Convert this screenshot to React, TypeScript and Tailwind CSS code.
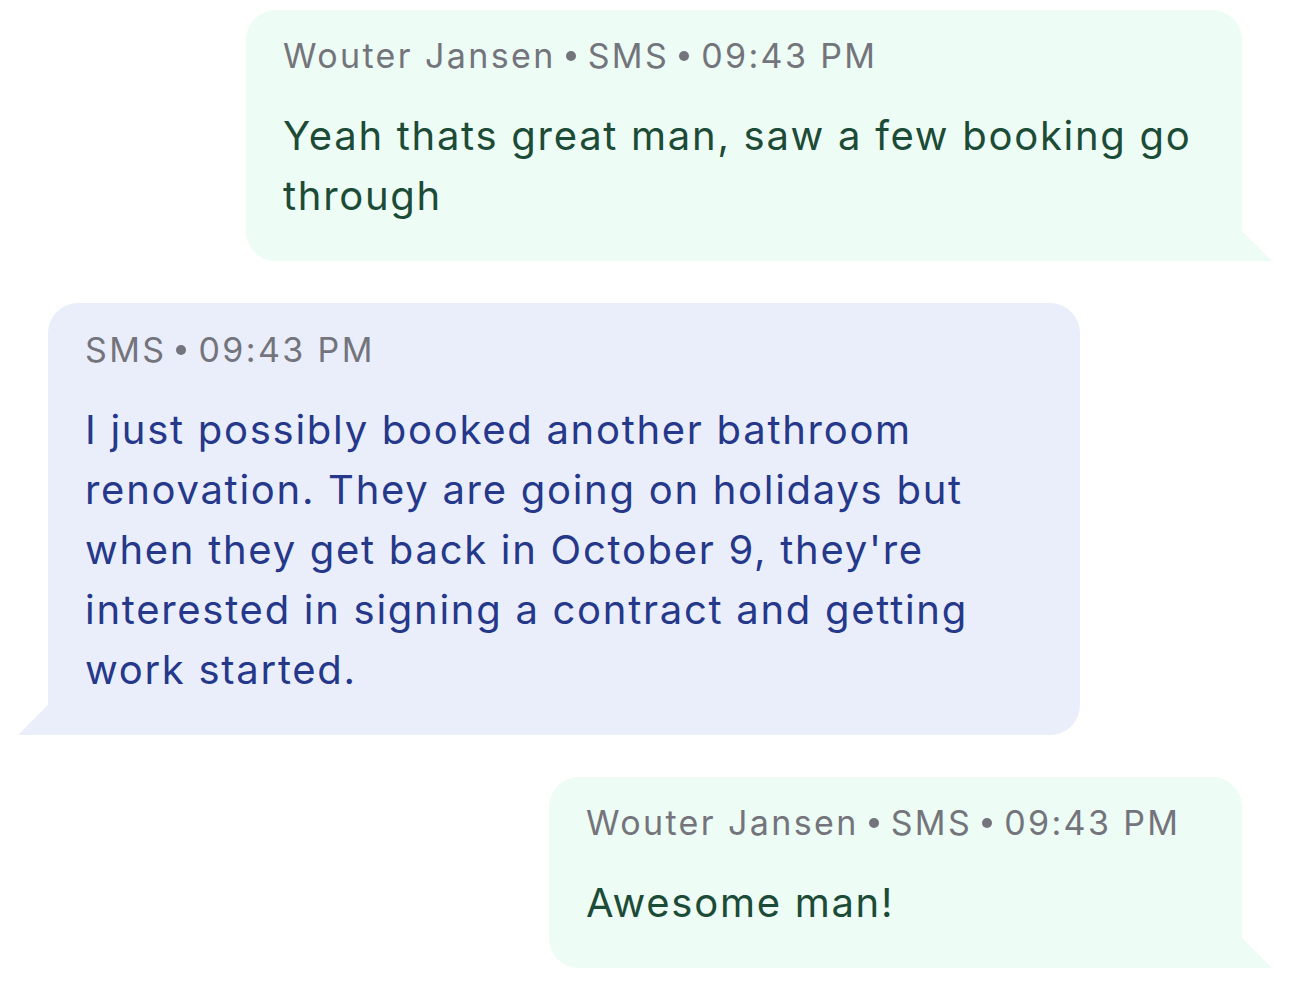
import React from "react"

type Msg = {
    side: "out" | "in"
    meta: string[]
    text: string
    width: string
}

const messages: Msg[] = [
    {
        side: "out",
        meta: ["Wouter Jansen", "SMS", "09:43 PM"],
        text: "Yeah thats great man, saw a few booking go through",
        width: "w-[996px]",
    },
    {
        side: "in",
        meta: ["SMS", "09:43 PM"],
        text: "I just possibly booked another bathroom renovation. They are going on holidays but when they get back in October 9, they're interested in signing a contract and getting work started.",
        width: "w-[1032px]",
    },
    {
        side: "out",
        meta: ["Wouter Jansen", "SMS", "09:43 PM"],
        text: "Awesome man!",
        width: "w-[693px]",
    },
]

const Bubble = ({ msg }: { msg: Msg }) => {
    const out = msg.side === "out"
    return (
        <div className={`relative ${msg.width} ${out ? "self-end bg-[#edfcf4] rounded-t-[30px] rounded-bl-[30px] pt-[24px] pb-[35px]" : "self-start bg-[#eaeefb] rounded-t-[30px] rounded-br-[30px] pt-[25px] pb-[35px]"} pl-[37px] pr-[40px]`}>
            <div className="flex items-center text-[34px] leading-[44px] tracking-[0.07em] text-[#74747c]">
                {msg.meta.map((m, i) => (
                    <span key={i} className="flex items-center">
                        {i > 0 && <span className="ml-[10px] mr-[12px] w-[10px] h-[10px] rounded-full bg-[#74747c]" />}
                        {m}
                    </span>
                ))}
            </div>
            <p className={`mt-[28px] text-[40px] leading-[60px] tracking-[0.043em] ${out ? "text-[#1c4b37]" : "text-[#25388a]"}`}>
                {msg.text}
            </p>
            {out ? (
                <svg className="absolute right-[-30px] bottom-0" width="30" height="30" viewBox="0 0 30 30">
                    <polygon points="0,0 30,30 0,30" fill="#edfcf4" />
                </svg>
            ) : (
                <svg className="absolute left-[-30px] bottom-0" width="30" height="30" viewBox="0 0 30 30">
                    <polygon points="30,0 0,30 30,30" fill="#eaeefb" />
                </svg>
            )}
        </div>
    )
}

export default function App() {
    return (
        <div className="w-[1290px] h-[991px] bg-white flex flex-col gap-[42px] pt-[10px] px-[48px] font-['Inter',sans-serif]">
            {messages.map((m, i) => (
                <Bubble key={i} msg={m} />
            ))}
        </div>
    )
}
